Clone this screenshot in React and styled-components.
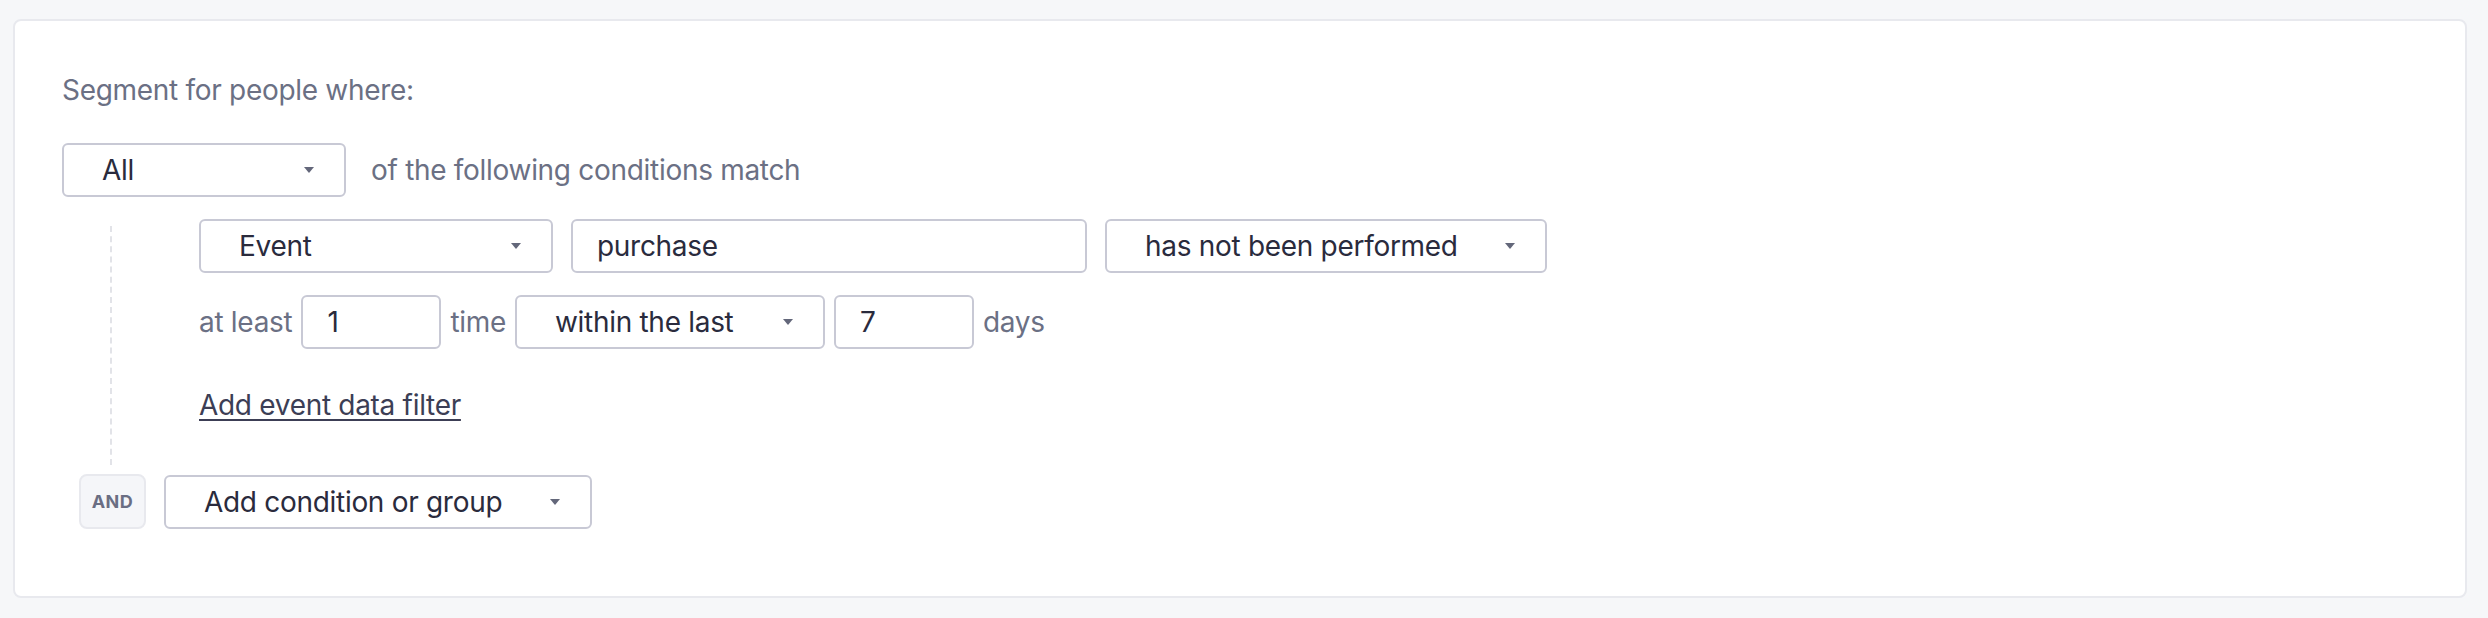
import React from 'react';
import styled, { createGlobalStyle } from 'styled-components';

const GlobalStyle = createGlobalStyle`
	* {
		box-sizing: border-box;
	}

	body {
		margin: 0;
		padding: 19px 21px 20px 13px;
		background-color: #f6f7f9;
		font-family: Inter, 'Liberation Sans', sans-serif;
	}
`;

const Card = styled.section`
	background-color: #ffffff;
	border: 2px solid #e8e9ee;
	border-radius: 8px;
	padding: 52px 47px 67px 47px;
	letter-spacing: -0.3px;
`;

const Title = styled.p`
	margin: 0;
	font-size: 28px;
	line-height: 34px;
	color: #6b7084;
`;

const Row = styled.div`
	display: flex;
	align-items: center;
	gap: ${({ gap }) => gap || 18}px;
	margin-top: ${({ top }) => top || 0}px;
`;

const Label = styled.span`
	font-size: 28px;
	line-height: 34px;
	color: #6b7084;
	white-space: nowrap;
`;

const Select = styled.div`
	display: flex;
	align-items: center;
	justify-content: space-between;
	flex: none;
	width: ${({ width }) => width}px;
	height: 54px;
	padding: 0 30px 0 38px;
	border: 2px solid #c8c9d5;
	border-radius: 6px;
	background-color: #ffffff;
	font-size: 28px;
	color: #2a2b3d;
	white-space: nowrap;
`;

const Caret = styled.span`
	width: 0;
	height: 0;
	border-left: 5px solid transparent;
	border-right: 5px solid transparent;
	border-top: 6px solid #63677a;
`;

const Input = styled.div`
	display: flex;
	align-items: center;
	flex: none;
	width: ${({ width }) => width}px;
	height: 54px;
	padding-left: 24px;
	border: 2px solid #c8c9d5;
	border-radius: 6px;
	background-color: #ffffff;
	font-size: 28px;
	color: #2a2b3d;
`;

const Group = styled.div`
	position: relative;
	margin-top: 22px;
	padding: 0 0 43px 137px;

	&::before {
		content: '';
		position: absolute;
		left: 48px;
		top: 7px;
		bottom: 0;
		border-left: 2px dashed #e2e3e8;
	}
`;

const FilterLink = styled.a`
	display: inline-block;
	margin-top: 39px;
	font-size: 28px;
	line-height: 34px;
	color: #3c3e55;
	text-decoration: underline;
	text-decoration-thickness: 2px;
	text-underline-offset: 4px;
	cursor: pointer;
`;

const AndBadge = styled.div`
	display: flex;
	align-items: center;
	justify-content: center;
	flex: none;
	width: 67px;
	height: 55px;
	margin-left: 17px;
	background-color: #f5f6f9;
	border: 2px solid #e8e9ee;
	border-radius: 8px;
	font-size: 18px;
	font-weight: 700;
	letter-spacing: 0.5px;
	color: #6a6e83;
`;

const Dropdown = ({ width, children }) => (
	<Select width={width}>
		<span>{children}</span>
		<Caret />
	</Select>
);

const App = () => {
	return (
		<>
			<GlobalStyle />
			<Card>
				<Title>Segment for people where:</Title>
				<Row top={36} gap={25}>
					<Dropdown width={284}>All</Dropdown>
					<Label>of the following conditions match</Label>
				</Row>
				<Group>
					<Row>
						<Dropdown width={354}>Event</Dropdown>
						<Input width={516}>purchase</Input>
						<Dropdown width={442}>has not been performed</Dropdown>
					</Row>
					<Row top={22} gap={9}>
						<Label>at least</Label>
						<Input width={140}>1</Input>
						<Label>time</Label>
						<Dropdown width={310}>within the last</Dropdown>
						<Input width={140}>7</Input>
						<Label>days</Label>
					</Row>
					<FilterLink>Add event data filter</FilterLink>
				</Group>
				<Row top={9}>
					<AndBadge>AND</AndBadge>
					<Dropdown width={428}>Add condition or group</Dropdown>
				</Row>
			</Card>
		</>
	);
};

export default App;
